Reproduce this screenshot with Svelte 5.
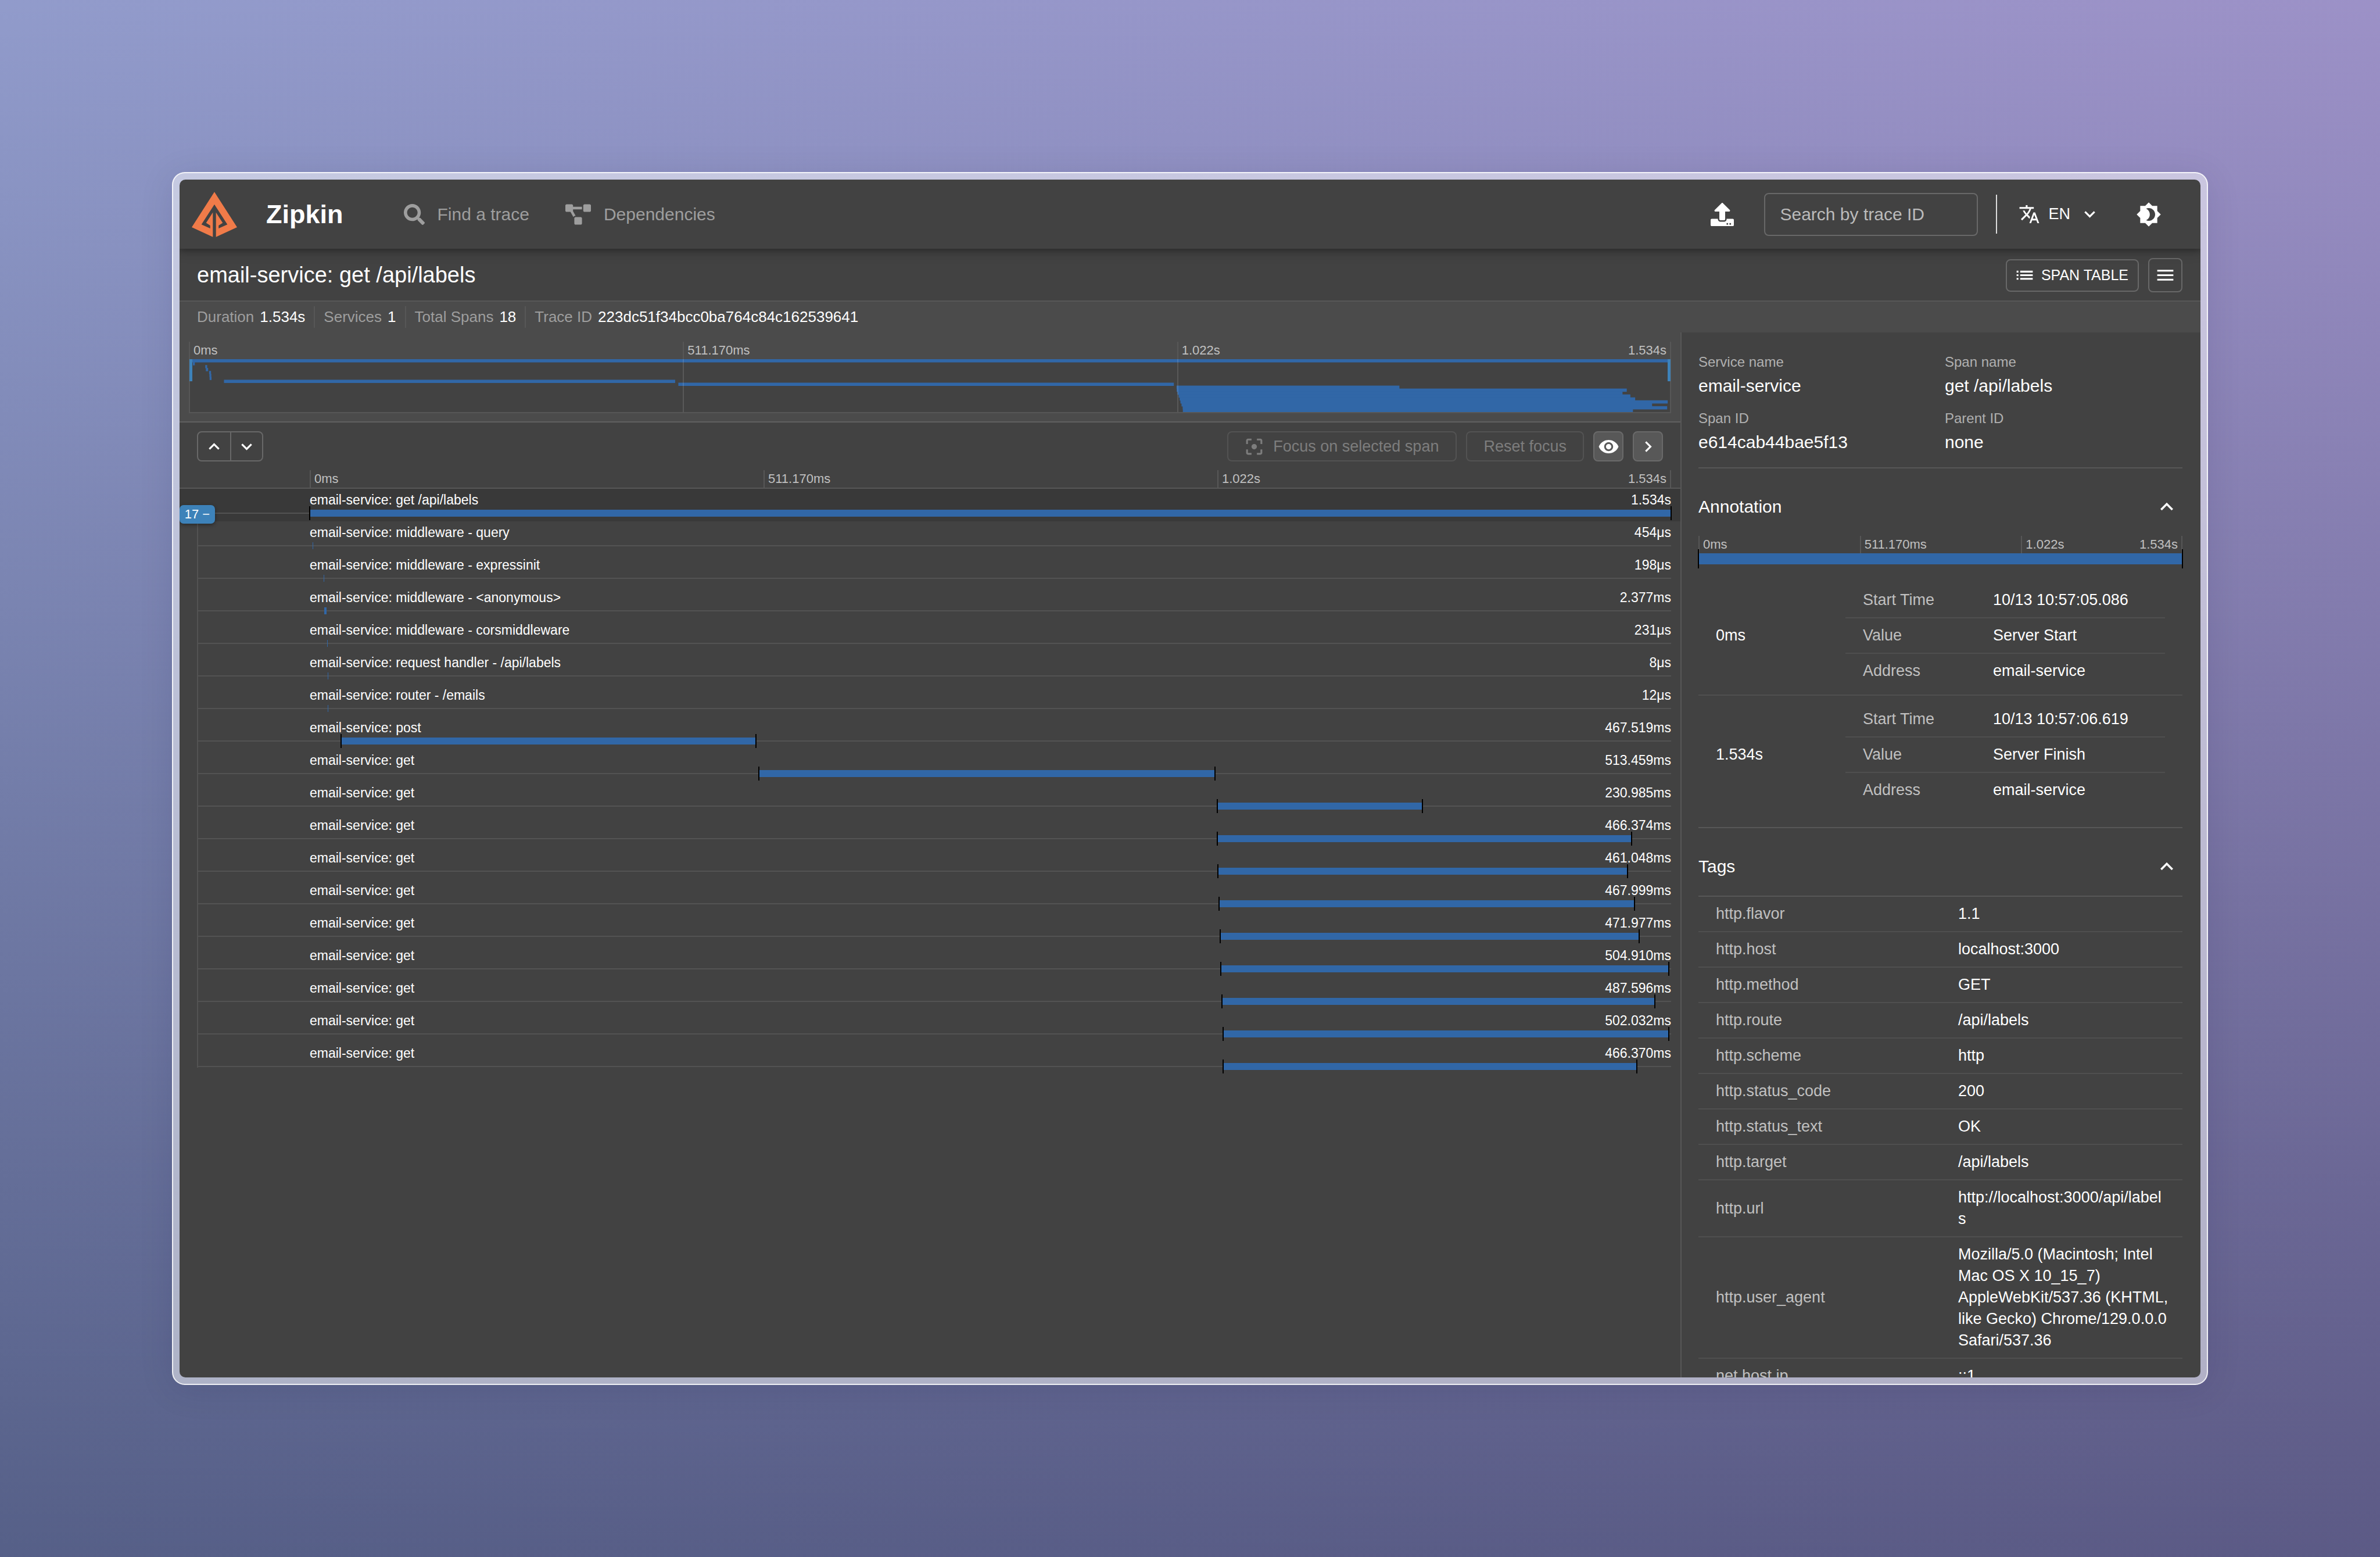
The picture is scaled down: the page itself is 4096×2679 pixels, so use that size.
<script>
  const TOTAL = 1533.51;

  const spans = [
    { name: 'get /api/labels', duration: '1.534s', start: 0, length: TOTAL, marked: true },
    { name: 'middleware - query', duration: '454μs', start: 3, length: 0.454 },
    { name: 'middleware - expressinit', duration: '198μs', start: 15.8, length: 0.198 },
    { name: 'middleware - <anonymous>', duration: '2.377ms', start: 16.4, length: 2.377 },
    { name: 'middleware - corsmiddleware', duration: '231μs', start: 19.8, length: 0.231 },
    { name: 'request handler - /api/labels', duration: '8μs', start: 20.1, length: 0.008 },
    { name: 'router - /emails', duration: '12μs', start: 20.3, length: 0.012 },
    { name: 'post', duration: '467.519ms', start: 35.2, length: 467.519, marked: true },
    { name: 'get', duration: '513.459ms', start: 506, length: 513.459, marked: true },
    { name: 'get', duration: '230.985ms', start: 1022.2, length: 230.985, marked: true },
    { name: 'get', duration: '466.374ms', start: 1022.4, length: 466.374, marked: true },
    { name: 'get', duration: '461.048ms', start: 1023.3, length: 461.048, marked: true },
    { name: 'get', duration: '467.999ms', start: 1024.5, length: 467.999, marked: true },
    { name: 'get', duration: '471.977ms', start: 1025.5, length: 471.977, marked: true },
    { name: 'get', duration: '504.910ms', start: 1026.3, length: 504.91, marked: true },
    { name: 'get', duration: '487.596ms', start: 1027.4, length: 487.596, marked: true },
    { name: 'get', duration: '502.032ms', start: 1028.6, length: 502.032, marked: true },
    { name: 'get', duration: '466.370ms', start: 1028.8, length: 466.37, marked: true }
  ];

  const annotations = [
    { at: '0ms', rows: [['Start Time', '10/13 10:57:05.086'], ['Value', 'Server Start'], ['Address', 'email-service']] },
    { at: '1.534s', rows: [['Start Time', '10/13 10:57:06.619'], ['Value', 'Server Finish'], ['Address', 'email-service']] }
  ];

  const tags = [
    ['http.flavor', '1.1'],
    ['http.host', 'localhost:3000'],
    ['http.method', 'GET'],
    ['http.route', '/api/labels'],
    ['http.scheme', 'http'],
    ['http.status_code', '200'],
    ['http.status_text', 'OK'],
    ['http.target', '/api/labels'],
    ['http.url', 'http://localhost:3000/api/labels'],
    ['http.user_agent', 'Mozilla/5.0 (Macintosh; Intel Mac OS X 10_15_7) AppleWebKit/537.36 (KHTML, like Gecko) Chrome/129.0.0.0 Safari/537.36'],
    ['net.host.ip', '::1']
  ];

  const details = [
    ['Service name', 'email-service'],
    ['Span name', 'get /api/labels'],
    ['Span ID', 'e614cab44bae5f13'],
    ['Parent ID', 'none']
  ];

  const stats = [
    ['Duration', '1.534s'],
    ['Services', '1'],
    ['Total Spans', '18'],
    ['Trace ID', '223dc51f34bcc0ba764c84c162539641']
  ];

  const icons = {
    up: 'M12 8l-6 6 1.41 1.41L12 10.83l4.59 4.58L18 14z',
    down: 'M16.59 8.59L12 13.17 7.41 8.59 6 10l6 6 6-6z',
    right: 'M8.59 16.59L13.17 12 8.59 7.41 10 6l6 6-6 6z',
    translate:
      'M12.87 15.07l-2.54-2.51.03-.03c1.74-1.94 2.98-4.17 3.71-6.53H17V4h-7V2H8v2H1v1.99h11.17C11.5 7.92 10.44 9.75 9 11.35 8.07 10.32 7.3 9.19 6.69 8h-2c.73 1.63 1.73 3.17 2.98 4.56l-5.09 5.02L4 19l5-5 3.11 3.11.76-2.04zM18.5 10h-2L12 22h2l1.12-3h4.75L21 22h2l-4.5-12zm-2.62 7l1.62-4.33L19.12 17h-3.24z',
    theme:
      'M20 8.69V4h-4.69L12 .69 8.69 4H4v4.69L.69 12 4 15.31V20h4.69L12 23.31 15.31 20H20v-4.69L23.31 12 20 8.69zM12 18c-.89 0-1.74-.2-2.5-.55C11.56 16.5 13 14.42 13 12s-1.44-4.5-3.5-5.45C10.26 6.2 11.11 6 12 6c3.31 0 6 2.69 6 6s-2.69 6-6 6z',
    list: 'M3 13h2v-2H3v2zm0 4h2v-2H3v2zm0-8h2V7H3v2zm4 4h14v-2H7v2zm0 4h14v-2H7v2zM7 7v2h14V7H7z',
    menu: 'M3 18h18v-2H3v2zm0-5h18v-2H3v2zm0-7v2h18V6H3z',
    eye: 'M12 4.5C7 4.5 2.73 7.61 1 12c1.73 4.39 6 7.5 11 7.5s9.27-3.11 11-7.5c-1.73-4.39-6-7.5-11-7.5zM12 17c-2.76 0-5-2.24-5-5s2.24-5 5-5 5 2.24 5 5-2.24 5-5 5zm0-8c-1.66 0-3 1.34-3 3s1.34 3 3 3 3-1.34 3-3-1.34-3-3-3z',
    focus:
      'M5 15H3v4c0 1.1.9 2 2 2h4v-2H5v-4zM5 5h4V3H5c-1.1 0-2 .9-2 2v4h2V5zm14-2h-4v2h4v4h2V5c0-1.1-.9-2-2-2zm0 16h-4v2h4c1.1 0 2-.9 2-2v-4h-2v4zM12 9c-1.66 0-3 1.34-3 3s1.34 3 3 3 3-1.34 3-3-1.34-3-3-3z'
  };

  const pct = (ms) => (ms / TOTAL) * 100;
</script>

{#snippet icon(path)}
  <svg class="icon" viewBox="0 0 24 24" aria-hidden="true"><path d={path} /></svg>
{/snippet}

{#snippet ruler()}
  <div class="ruler">
    <span class="tick">0ms</span>
    <span class="tick">511.170ms</span>
    <span class="tick last"><span>1.022s</span><span>1.534s</span></span>
  </div>
{/snippet}

<div class="stage">
  <div class="frame">
    <div class="app">
      <header class="topbar">
        <svg class="logo" viewBox="0 0 290 288" aria-hidden="true">
          <path d="M145 0L0 226L135 288V131L92 198L118 215V233L62 208L145 80Z" />
          <path d="M145 0L290 226L155 288V131L198 198L172 215V233L228 208L145 80Z" />
        </svg>
        <strong class="brand">Zipkin</strong>
        <nav class="nav">
          <a class="navlink" href="#find">
            <svg class="search" viewBox="0 0 512 512" aria-hidden="true"><path d="M505 442.7L405.3 343c-4.5-4.5-10.6-7-17-7H372c27.6-35.3 44-79.7 44-128C416 93.1 322.9 0 208 0S0 93.1 0 208s93.1 208 208 208c48.3 0 92.7-16.4 128-44v16.3c0 6.4 2.5 12.5 7 17l99.7 99.7c9.4 9.4 24.6 9.4 33.9 0l28.3-28.3c9.4-9.4 9.4-24.6.1-34zM208 336c-70.7 0-128-57.2-128-128 0-70.7 57.2-128 128-128 70.7 0 128 57.2 128 128 0 70.7-57.2 128-128 128z" /></svg>
            Find a trace
          </a>
          <a class="navlink" href="#dependencies">
            <svg class="diagram" viewBox="0 0 640 512" aria-hidden="true"><path d="M384 320H256c-17.67 0-32 14.33-32 32v128c0 17.67 14.33 32 32 32h128c17.67 0 32-14.33 32-32V352c0-17.67-14.33-32-32-32zM192 32c0-17.67-14.33-32-32-32H32C14.33 0 0 14.33 0 32v128c0 17.67 14.33 32 32 32h95.72l73.16 128.04C211.98 300.98 232.4 288 256 288h.28L192 175.51V128h224V64H192V32zM608 0H480c-17.67 0-32 14.33-32 32v128c0 17.67 14.33 32 32 32h128c17.67 0 32-14.33 32-32V32c0-17.67-14.33-32-32-32z" /></svg>
            Dependencies
          </a>
        </nav>
        <button class="plain upload" aria-label="Upload JSON">
          <svg viewBox="0 0 512 512" aria-hidden="true"><path d="M296 384h-80c-13.3 0-24-10.7-24-24V192h-87.7c-17.8 0-26.7-21.5-14.1-34.1L242.3 5.7c7.5-7.5 19.8-7.5 27.3 0l152.2 152.2c12.6 12.6 3.7 34.1-14.1 34.1H320v168c0 13.3-10.7 24-24 24zm216-8v112c0 13.3-10.7 24-24 24H24c-13.3 0-24-10.7-24-24V376c0-13.3 10.7-24 24-24h136v8c0 30.9 25.1 56 56 56h80c30.9 0 56-25.1 56-56v-8h136c13.3 0 24 10.7 24 24zm-124 88c0-11-9-20-20-20s-20 9-20 20 9 20 20 20 20-9 20-20zm64 0c0-11-9-20-20-20s-20 9-20 20 9 20 20 20 20-9 20-20z" /></svg>
        </button>
        <input class="trace-search" type="text" placeholder="Search by trace ID" aria-label="Search by trace ID" />
        <button class="plain lang">
          {@render icon(icons.translate)}
          <span class="code">EN</span>
          {@render icon(icons.down)}
        </button>
        <button class="plain theme" aria-label="Switch theme">{@render icon(icons.theme)}</button>
      </header>

      <div class="titlebar">
        <h1>email-service: get /api/labels</h1>
        <button class="btn span-table">{@render icon(icons.list)}SPAN TABLE</button>
        <button class="btn menu" aria-label="Menu">{@render icon(icons.menu)}</button>
      </div>

      <dl class="stats">
        {#each stats as [label, value]}
          <div class="stat"><dt>{label}</dt><dd>{value}</dd></div>
        {/each}
      </dl>

      <div class="body">
        <main class="trace">
          <section class="overview">
            {@render ruler()}
            <div class="minimap">
              <svg class="mini-bars" viewBox="0 0 {TOTAL} 180" preserveAspectRatio="none" aria-hidden="true">
                {#each spans as span, i}
                  <rect x={span.start} y={i * 10} width={Math.max(span.length, 2)} height="11" />
                {/each}
              </svg>
              <div class="mini-grid"><i></i><i></i><i></i></div>
              <span class="handle start"></span>
              <span class="handle end"></span>
            </div>
          </section>

          <div class="toolbar">
            <div class="pair">
              <button aria-label="Previous span">{@render icon(icons.up)}</button>
              <button aria-label="Next span">{@render icon(icons.down)}</button>
            </div>
            <button class="btn focus" disabled>{@render icon(icons.focus)}Focus on selected span</button>
            <button class="btn reset" disabled>Reset focus</button>
            <button class="btn filled" aria-label="Toggle minimap">{@render icon(icons.eye)}</button>
            <button class="btn filled" aria-label="Toggle details">{@render icon(icons.right)}</button>
          </div>

          <div class="timeline-ruler">{@render ruler()}</div>

          <ol class="spans">
            {#each spans as span, i}
              <li class="span" class:selected={i === 0}>
                <div class="label">
                  <span>email-service: {span.name}</span>
                  <span>{span.duration}</span>
                </div>
                <div class="track">
                  <span
                    class="bar"
                    class:marked={span.marked}
                    style="left: {pct(span.start)}%; width: {pct(span.length)}%"
                  ></span>
                </div>
                {#if i === 0}
                  <button class="badge">17 −</button>
                {/if}
              </li>
            {/each}
          </ol>
        </main>

        <aside class="detail">
          <dl class="info">
            {#each details as [label, value]}
              <div><dt>{label}</dt><dd>{value}</dd></div>
            {/each}
          </dl>

          <section class="panel">
            <h2>
              Annotation
              <button class="plain" aria-label="Collapse annotation">{@render icon(icons.up)}</button>
            </h2>
            {@render ruler()}
            <div class="annotation-bar"></div>
            <table class="annotations">
              <tbody>
                {#each annotations as annotation}
                  <tr>
                    <th class="at" scope="row">{annotation.at}</th>
                    <td class="nest">
                      <table class="inner">
                        <tbody>
                          {#each annotation.rows as [key, value]}
                            <tr><th scope="row">{key}</th><td>{value}</td></tr>
                          {/each}
                        </tbody>
                      </table>
                    </td>
                  </tr>
                {/each}
              </tbody>
            </table>
          </section>

          <section class="panel">
            <h2>
              Tags
              <button class="plain" aria-label="Collapse tags">{@render icon(icons.up)}</button>
            </h2>
            <table class="tags">
              <tbody>
                {#each tags as [key, value]}
                  <tr><th scope="row">{key}</th><td>{value}</td></tr>
                {/each}
              </tbody>
            </table>
          </section>
        </aside>
      </div>
    </div>
  </div>
</div>

<style>
  :global(body) {
    margin: 0;
  }

  .stage,
  .stage * {
    box-sizing: border-box;
  }

  .stage {
    --paper: #424242;
    --band: #4b4b4b;
    --line: #575757;
    --faint: #4f4f4f;
    --edge: #686868;
    --muted: #9e9e9e;
    --soft: #c0c0c0;
    --bar: #3167a7;
    --accent: #3d82b9;
    display: flex;
    height: 100vh;
    padding: 296px;
    background:
      linear-gradient(to bottom, rgba(10, 20, 50, 0), rgba(10, 20, 50, 0.44)),
      linear-gradient(to right, #919bcb, #9c91c7);
    color: #fff;
    font-family: 'Liberation Sans', Arial, sans-serif;
    font-size: 27px;
  }

  h1,
  h2,
  dl,
  dd,
  ol {
    margin: 0;
    padding: 0;
    font-weight: 400;
  }

  button {
    padding: 0;
    color: inherit;
    font: inherit;
    cursor: pointer;
  }

  svg {
    display: block;
    flex: none;
    fill: currentColor;
  }

  .icon {
    width: 37px;
    height: 37px;
  }

  .plain {
    display: flex;
    align-items: center;
    border: 0;
    background: none;
  }

  .btn {
    display: flex;
    align-items: center;
    justify-content: center;
    border: 2px solid var(--edge);
    border-radius: 8px;
    background: none;
  }

  .btn:disabled {
    border-color: #535353;
    color: #7d7d7d;
  }

  .frame {
    flex: 1;
    min-width: 0;
    padding: 11px;
    border: 2px solid rgba(255, 255, 255, 0.8);
    border-radius: 22px;
    background: rgba(255, 255, 255, 0.5);
    box-shadow: 0 8px 60px rgba(20, 20, 60, 0.1);
  }

  .app {
    display: flex;
    flex-direction: column;
    height: 100%;
    overflow: hidden;
    border-radius: 10px;
    background: var(--paper);
  }

  .topbar {
    position: relative;
    z-index: 1;
    display: flex;
    flex: none;
    align-items: center;
    height: 119px;
    padding: 0 67px 0 21px;
    box-shadow: 0 4px 8px rgba(0, 0, 0, 0.22), 0 8px 18px rgba(0, 0, 0, 0.14);
  }

  .logo {
    width: 78px;
    height: 78px;
    fill: #f07b49;
  }

  .brand {
    margin-left: 50px;
    font-size: 45px;
  }

  .nav {
    display: flex;
    flex: 1;
    gap: 62px;
    margin-left: 104px;
  }

  .navlink {
    display: flex;
    align-items: center;
    gap: 22px;
    color: var(--muted);
    font-size: 30px;
    text-decoration: none;
  }

  .search {
    width: 36px;
    height: 36px;
  }

  .diagram {
    width: 44px;
    height: 36px;
  }

  .upload svg {
    width: 40px;
    height: 40px;
  }

  .trace-search {
    width: 368px;
    height: 74px;
    margin-left: 52px;
    padding: 0 25px;
    border: 2px solid var(--edge);
    border-radius: 8px;
    outline: 0;
    background: none;
    color: inherit;
    font: inherit;
    font-size: 30px;
  }

  .trace-search::placeholder {
    color: #bbb;
    opacity: 1;
  }

  .lang {
    height: 67px;
    margin-left: 31px;
    padding-left: 37px;
    border-left: 2px solid #ddd;
  }

  .code {
    margin: 0 15px 0 14px;
  }

  .theme {
    margin-left: 61px;
  }

  .theme .icon {
    width: 44px;
    height: 44px;
  }

  .titlebar {
    display: flex;
    flex: none;
    align-items: center;
    gap: 16px;
    height: 91px;
    padding: 2px 31px 0 30px;
    border-bottom: 2px solid var(--line);
  }

  h1 {
    flex: 1;
    font-size: 38px;
  }

  .span-table {
    gap: 10px;
    height: 56px;
    padding: 0 16px 0 12px;
    font-size: 25px;
  }

  .menu {
    width: 59px;
    height: 59px;
  }

  .stats {
    display: flex;
    flex: none;
    align-items: center;
    height: 53px;
    padding: 0 15px;
    background: var(--band);
    font-size: 26px;
  }

  .stat {
    display: flex;
    gap: 10px;
    padding: 0 15px;
    line-height: 37px;
  }

  .stat + .stat {
    border-left: 2px solid var(--line);
  }

  .stat dt {
    color: var(--muted);
  }

  .body {
    display: grid;
    flex: 1;
    grid-template-columns: minmax(0, 1fr) 895px;
    min-height: 0;
  }

  .trace,
  .detail {
    min-width: 0;
    overflow: hidden;
  }

  .overview {
    padding: 16px 16px 14px;
    border-bottom: 2px solid #606060;
    background: var(--band);
  }

  .ruler {
    display: grid;
    grid-template-columns: repeat(3, 1fr);
    color: var(--soft);
    font-size: 22px;
    line-height: 30px;
  }

  .tick {
    padding: 0 6px;
    border-left: 2px solid var(--line);
  }

  .tick.last {
    display: flex;
    justify-content: space-between;
    border-right: 2px solid var(--line);
  }

  .minimap {
    position: relative;
    height: 93px;
    border: solid var(--line);
    border-width: 0 2px 2px;
    background: var(--paper);
  }

  .mini-bars {
    width: 100%;
    height: 100%;
    fill: var(--bar);
  }

  .mini-grid {
    position: absolute;
    inset: 0 -2px;
    display: grid;
    grid-template-columns: repeat(3, 1fr);
  }

  .mini-grid i + i {
    border-left: 2px solid rgba(255, 255, 255, 0.12);
  }

  .handle {
    position: absolute;
    top: 0;
    width: 5px;
    height: 38px;
    background: var(--accent);
  }

  .handle.start {
    left: -1px;
  }

  .handle.end {
    right: -1px;
  }

  .toolbar {
    display: flex;
    gap: 16px;
    padding: 15px 30px;
  }

  .toolbar .btn {
    height: 52px;
  }

  .pair {
    display: flex;
    margin-right: auto;
    border: 2px solid var(--edge);
    border-radius: 8px;
  }

  .pair button {
    display: flex;
    align-items: center;
    justify-content: center;
    width: 55px;
    height: 48px;
    border: 0;
    background: none;
  }

  .pair button + button {
    border-left: 2px solid var(--edge);
  }

  .focus {
    gap: 14px;
    padding: 0 29px 0 26px;
  }

  .reset {
    padding: 0 28px;
  }

  .filled {
    width: 52px;
    border-color: #6a6a6a;
    background: #585858;
  }

  .timeline-ruler {
    padding: 0 16px 0 224px;
    border-bottom: 2px solid var(--line);
  }

  .spans {
    position: relative;
    list-style: none;
  }

  .spans::before {
    position: absolute;
    top: 56px;
    bottom: 12px;
    left: 30px;
    width: 2px;
    background: #535353;
    content: '';
  }

  .span {
    position: relative;
    height: 56px;
    padding: 5px 16px 0 224px;
    font-size: 23px;
    line-height: 28px;
  }

  .span.selected {
    background: #393939;
  }

  .span::before {
    position: absolute;
    top: 41px;
    right: 16px;
    left: 30px;
    height: 2px;
    background: #535353;
    content: '';
  }

  .label {
    display: flex;
    justify-content: space-between;
  }

  .track {
    position: relative;
    height: 22px;
  }

  .bar {
    position: absolute;
    top: 3px;
    min-width: 1px;
    height: 12px;
    background: var(--bar);
  }

  .bar.marked::before,
  .bar.marked::after,
  .annotation-bar::before,
  .annotation-bar::after {
    position: absolute;
    top: -6px;
    bottom: -6px;
    width: 2px;
    background: #000;
    content: '';
  }

  .bar.marked::before,
  .annotation-bar::before {
    left: -1px;
  }

  .bar.marked::after,
  .annotation-bar::after {
    right: -1px;
  }

  .badge {
    position: absolute;
    top: 28px;
    left: 0;
    z-index: 1;
    width: 61px;
    height: 32px;
    border: 0;
    border-radius: 7px;
    background: var(--accent);
    box-shadow: 0 2px 6px rgba(0, 0, 0, 0.4);
    font-size: 22px;
    line-height: 32px;
  }

  .detail {
    padding: 0 31px 0 29px;
    border-left: 2px solid var(--line);
  }

  .info {
    display: grid;
    grid-template-columns: 1fr 1fr;
    gap: 15px;
    padding: 32px 0 21px;
  }

  .info dt {
    color: #b0b0b0;
    font-size: 24px;
    line-height: 37px;
  }

  .info dd {
    font-size: 30px;
    line-height: 45px;
  }

  .panel {
    border-top: 2px solid var(--line);
  }

  h2 {
    display: flex;
    align-items: center;
    justify-content: space-between;
    padding: 43px 5px 28px 0;
    font-size: 30px;
    line-height: 45px;
  }

  h2 .icon {
    width: 44px;
    height: 44px;
  }

  .annotation-bar {
    position: relative;
    height: 19px;
    margin-bottom: 21px;
    background: var(--bar);
  }

  .annotation-bar::before,
  .annotation-bar::after {
    top: -7px;
    bottom: -7px;
  }

  table {
    width: 100%;
    border-collapse: separate;
    border-spacing: 0;
    table-layout: fixed;
    line-height: 37px;
    text-align: left;
  }

  th {
    color: var(--soft);
    font-weight: 400;
  }

  th,
  td {
    padding: 11px 24px 11px 30px;
    border-bottom: 2px solid var(--faint);
    overflow-wrap: anywhere;
  }

  .annotations {
    margin-bottom: 23px;
  }

  .annotations tr:last-child > th,
  .annotations tr:last-child > td {
    border-bottom: 0;
  }

  .annotations .at {
    width: 223px;
    color: #fff;
  }

  .annotations .nest {
    padding: 11px 30px;
  }

  .inner th {
    width: 224px;
  }

  .inner td {
    padding-right: 0;
  }

  .tags {
    border-top: 2px solid var(--line);
  }

  .tags th {
    width: 417px;
  }
</style>
